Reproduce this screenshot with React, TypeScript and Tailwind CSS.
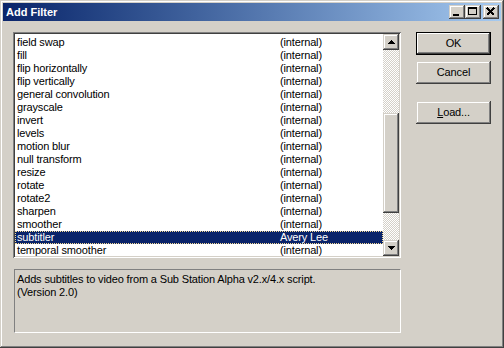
import { useState } from 'react'

const filters: [string, string][] = [
  ['field swap', '(internal)'],
  ['fill', '(internal)'],
  ['flip horizontally', '(internal)'],
  ['flip vertically', '(internal)'],
  ['general convolution', '(internal)'],
  ['grayscale', '(internal)'],
  ['invert', '(internal)'],
  ['levels', '(internal)'],
  ['motion blur', '(internal)'],
  ['null transform', '(internal)'],
  ['resize', '(internal)'],
  ['rotate', '(internal)'],
  ['rotate2', '(internal)'],
  ['sharpen', '(internal)'],
  ['smoother', '(internal)'],
  ['subtitler', 'Avery Lee'],
  ['temporal smoother', '(internal)'],
]

const raised =
  'bg-[#d4d0c8] shadow-[inset_-1px_-1px_#404040,inset_1px_1px_#d4d0c8,inset_-2px_-2px_#808080,inset_2px_2px_#ffffff]'

function CaptionButton({ kind }: { kind: 'min' | 'max' | 'close' }) {
  return (
    <div className={`w-[16px] h-[14px] flex items-center justify-center ${raised}`}>
      <svg width="16" height="14" viewBox="0 0 16 14" shapeRendering="crispEdges">
        {kind === 'min' && <rect x="4" y="9" width="6" height="2" fill="#000" />}
        {kind === 'max' && (
          <g fill="none" stroke="#000">
            <rect x="3.5" y="2.5" width="8" height="7" />
            <line x1="3" y1="3.5" x2="12" y2="3.5" />
          </g>
        )}
        {kind === 'close' && (
          <g stroke="#000" strokeWidth="1.6">
            <line x1="4" y1="3" x2="11" y2="10" />
            <line x1="11" y1="3" x2="4" y2="10" />
          </g>
        )}
      </svg>
    </div>
  )
}

function ScrollArrow({ up }: { up?: boolean }) {
  return (
    <div className={`w-[16px] h-[16px] flex items-center justify-center ${raised}`}>
      <svg width="7" height="4" viewBox="0 0 7 4" shapeRendering="crispEdges">
        {up ? (
          <path d="M3 0h1v1h1v1h1v1h1v1H0V3h1V2h1V1h1z" fill="#000" />
        ) : (
          <path d="M0 0h7v1H6v1H5v1H4v1H3V3H2V2H1V1H0z" fill="#000" />
        )}
      </svg>
    </div>
  )
}

function Button({ children, primary }: { children: React.ReactNode; primary?: boolean }) {
  return (
    <div
      className={`w-[75px] h-[23px] flex items-center justify-center text-black ${
        primary
          ? 'bg-[#d4d0c8] border border-black shadow-[inset_-1px_-1px_#404040,inset_1px_1px_#ffffff,inset_-2px_-2px_#808080]'
          : raised
      }`}
    >
      {children}
    </div>
  )
}

export default function App() {
  const [selected, setSelected] = useState(15)

  return (
    <div
      className="w-[504px] h-[348px] bg-[#d4d0c8] p-[3px] flex flex-col text-[11px] leading-[13px] tracking-[-0.15px] text-black shadow-[inset_-1px_-1px_#404040,inset_1px_1px_#d4d0c8,inset_-2px_-2px_#808080,inset_2px_2px_#ffffff]"
      style={{ fontFamily: '"Liberation Sans", Arial, sans-serif' }}
    >
      <div className="h-[18px] flex items-center bg-gradient-to-r from-[#0a246a] to-[#a6caf0] pl-[3px] pr-[2px]">
        <span className="font-bold text-white flex-1 tracking-normal">Add Filter</span>
        <div className="flex items-center">
          <CaptionButton kind="min" />
          <CaptionButton kind="max" />
          <div className="w-[2px]" />
          <CaptionButton kind="close" />
        </div>
      </div>

      <div className="flex pl-[10px] pt-[11px]">
        <div className="flex flex-col w-[388px]">
          <div className="h-[226px] flex p-[2px] bg-white shadow-[inset_1px_1px_#808080,inset_-1px_-1px_#ffffff,inset_2px_2px_#404040,inset_-2px_-2px_#d4d0c8]">
            <div className="flex-1 flex flex-col overflow-hidden pt-[2px]">
              {filters.map(([name, author], i) => (
                <div
                  key={name}
                  onClick={() => setSelected(i)}
                  className={`h-[13px] shrink-0 flex ${
                    i === selected
                      ? 'bg-[#0a246a] text-white border border-dotted border-[#f5db95]'
                      : 'border border-transparent'
                  }`}
                >
                  <span className="w-[264px] pl-[1px] leading-[11px]">{name}</span>
                  <span className="leading-[11px]">{author}</span>
                </div>
              ))}
            </div>
            <div className="w-[16px] flex flex-col bg-[repeating-conic-gradient(#ffffff_0%_25%,#d4d0c8_0%_50%)] bg-[length:2px_2px]">
              <ScrollArrow up />
              <div className="flex-1 flex flex-col pt-[63px]">
                <div className={`h-[100px] ${raised}`} />
              </div>
              <ScrollArrow />
            </div>
          </div>

          <div className="mt-[11px] ml-[1px] h-[64px] px-[2px] py-[3px] border border-t-[#808080] border-l-[#808080] border-b-white border-r-white">
            <div>Adds subtitles to video from a Sub Station Alpha v2.x/4.x script.</div>
            <div>(Version 2.0)</div>
          </div>
        </div>

        <div className="flex flex-col ml-[15px] gap-[6px]">
          <Button primary>OK</Button>
          <Button>Cancel</Button>
          <div className="mt-[11px]">
            <Button>
              <span>
                <span className="underline">L</span>oad...
              </span>
            </Button>
          </div>
        </div>
      </div>
    </div>
  )
}
